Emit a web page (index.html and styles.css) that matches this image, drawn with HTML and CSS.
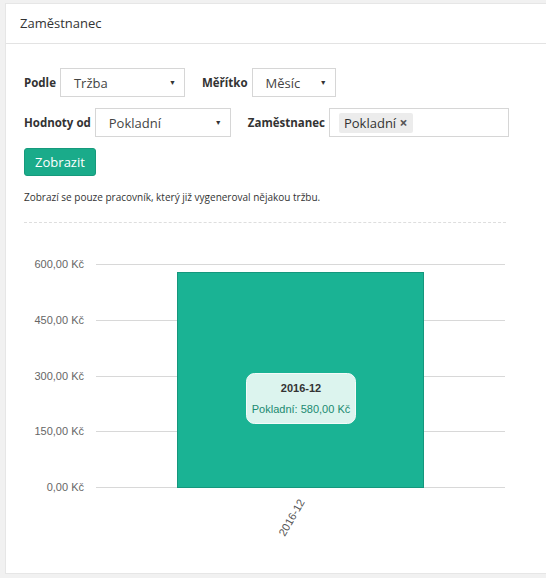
FILE: index.html
```html
<!DOCTYPE html>
<html lang="cs">
<head>
<meta charset="utf-8">
<title>Zaměstnanec</title>
<link rel="stylesheet" href="styles.css">
</head>
<body>
<div class="panel">
  <div class="panel-header">Zaměstnanec</div>
  <div class="filters">
    <div class="row">
      <label class="lbl">Podle</label>
      <div class="select sel-podle"><span>Tržba</span><span class="caret">▼</span></div>
      <label class="lbl lbl-gap">Měřítko</label>
      <div class="select sel-meritko"><span>Měsíc</span><span class="caret">▼</span></div>
    </div>
    <div class="row row2">
      <label class="lbl">Hodnoty od</label>
      <div class="select sel-hodnoty"><span>Pokladní</span><span class="caret">▼</span></div>
      <label class="lbl lbl-gap">Zaměstnanec</label>
      <div class="tags"><span class="tag">Pokladní <b class="x">×</b></span></div>
    </div>
    <button class="btn">Zobrazit</button>
    <p class="note">Zobrazí se pouze pracovník, který již vygeneroval nějakou tržbu.</p>
    <div class="divider"></div>
  </div>
  <div class="chart">
    <svg width="540" height="340" viewBox="0 0 540 340">
      <g class="grid">
        <line x1="90" y1="32.5" x2="499" y2="32.5"/>
        <line x1="90" y1="88.5" x2="499" y2="88.5"/>
        <line x1="90" y1="144.5" x2="499" y2="144.5"/>
        <line x1="90" y1="199.5" x2="499" y2="199.5"/>
        <line x1="90" y1="255.5" x2="499" y2="255.5"/>
      </g>
      <g class="ylab">
        <text x="78" y="36">600,00 Kč</text>
        <text x="78" y="92">450,00 Kč</text>
        <text x="78" y="148">300,00 Kč</text>
        <text x="78" y="203">150,00 Kč</text>
        <text x="78" y="259">0,00 Kč</text>
      </g>
      <rect class="bar" x="171.5" y="40.5" width="246" height="215"/>
      <rect class="tip" x="240.5" y="141.5" width="109" height="50" rx="8" ry="8"/>
      <text class="tip-title" x="295" y="160">2016-12</text>
      <text class="tip-val" x="295" y="181">Pokladní: 580,00 Kč</text>
      <text class="xlab" x="299" y="270" transform="rotate(-60 299 270)">2016-12</text>
    </svg>
  </div>
</div>
</body>
</html>
```
FILE: styles.css
```css
html, body {
  margin: 0;
  padding: 0;
}
body {
  background: #f1f1f1;
  width: 546px;
  height: 578px;
  overflow: hidden;
  font-family: "Open Sans", "Liberation Sans", sans-serif;
  color: #333;
}
.panel {
  margin: 3px 0 0 5px;
  height: 571px;
  box-sizing: border-box;
  background: #fff;
  border: 1px solid #e6e6e6;
  border-right: none;
}
.panel-header {
  height: 39px;
  line-height: 38px;
  padding-left: 14px;
  font-size: 13px;
  color: #333;
  border-bottom: 1px solid #e3e3e3;
}
.filters {
  padding: 24px 18px 0 18px;
}
.row {
  display: flex;
  align-items: center;
  height: 29px;
}
.row2 {
  margin-top: 11px;
}
.lbl {
  font-weight: 700;
  font-size: 11.5px;
  color: #333;
  margin-right: 4px;
}
.lbl-gap {
  margin-left: 17px;
}
.select {
  box-sizing: border-box;
  height: 29px;
  border: 1px solid #d6d6d6;
  display: flex;
  align-items: center;
  justify-content: space-between;
  padding: 0 8px 0 13px;
  font-size: 13px;
  color: #444;
}
.caret {
  font-size: 7px;
  color: #333;
}
.sel-podle { width: 125px; }
.sel-meritko { width: 84px; }
.sel-hodnoty { width: 136px; padding-left: 13px; }
.tags {
  box-sizing: border-box;
  width: 180px;
  height: 29px;
  border: 1px solid #d6d6d6;
  display: flex;
  align-items: center;
  padding-left: 9px;
}
.tag {
  background: #ececec;
  border-radius: 2px;
  padding: 1px 5px 1px 5px;
  font-size: 13px;
  color: #333;
  line-height: 17px;
}
.x {
  color: #555;
  font-size: 14px;
  font-weight: 700;
}
.btn {
  margin-top: 11px;
  display: block;
  width: 72px;
  height: 28px;
  border: 1px solid #169a7c;
  border-radius: 3px;
  background: #1aab8a;
  color: #fff;
  font-family: "Open Sans", "Liberation Sans", sans-serif;
  font-size: 13px;
  padding: 0;
}
.note {
  margin: 14px 0 0 0;
  font-size: 10px;
  line-height: 14px;
  color: #333;
}
.divider {
  margin-top: 18px;
  border-top: 1px dashed #dedede;
  width: 482px;
}
.chart {
  margin-top: 9px;
  height: 340px;
}
.chart svg {
  display: block;
}
.grid line {
  stroke: #d8d8d8;
  stroke-width: 1;
}
.ylab text {
  font-family: "Liberation Sans", Arial, sans-serif;
  font-size: 11px;
  fill: #666;
  text-anchor: end;
}
.bar {
  fill: #1ab394;
  stroke: #15977d;
  stroke-width: 1;
}
.tip {
  fill: #dcf4ee;
  stroke: #f4fbf9;
  stroke-width: 1;
}
.tip-title {
  font-family: "Liberation Sans", Arial, sans-serif;
  font-size: 11px;
  font-weight: 700;
  fill: #333;
  text-anchor: middle;
}
.tip-val {
  font-family: "Liberation Sans", Arial, sans-serif;
  font-size: 11px;
  fill: #1b8a70;
  text-anchor: middle;
}
.xlab {
  font-family: "Liberation Sans", Arial, sans-serif;
  font-size: 11px;
  fill: #555;
  text-anchor: end;
}
```
